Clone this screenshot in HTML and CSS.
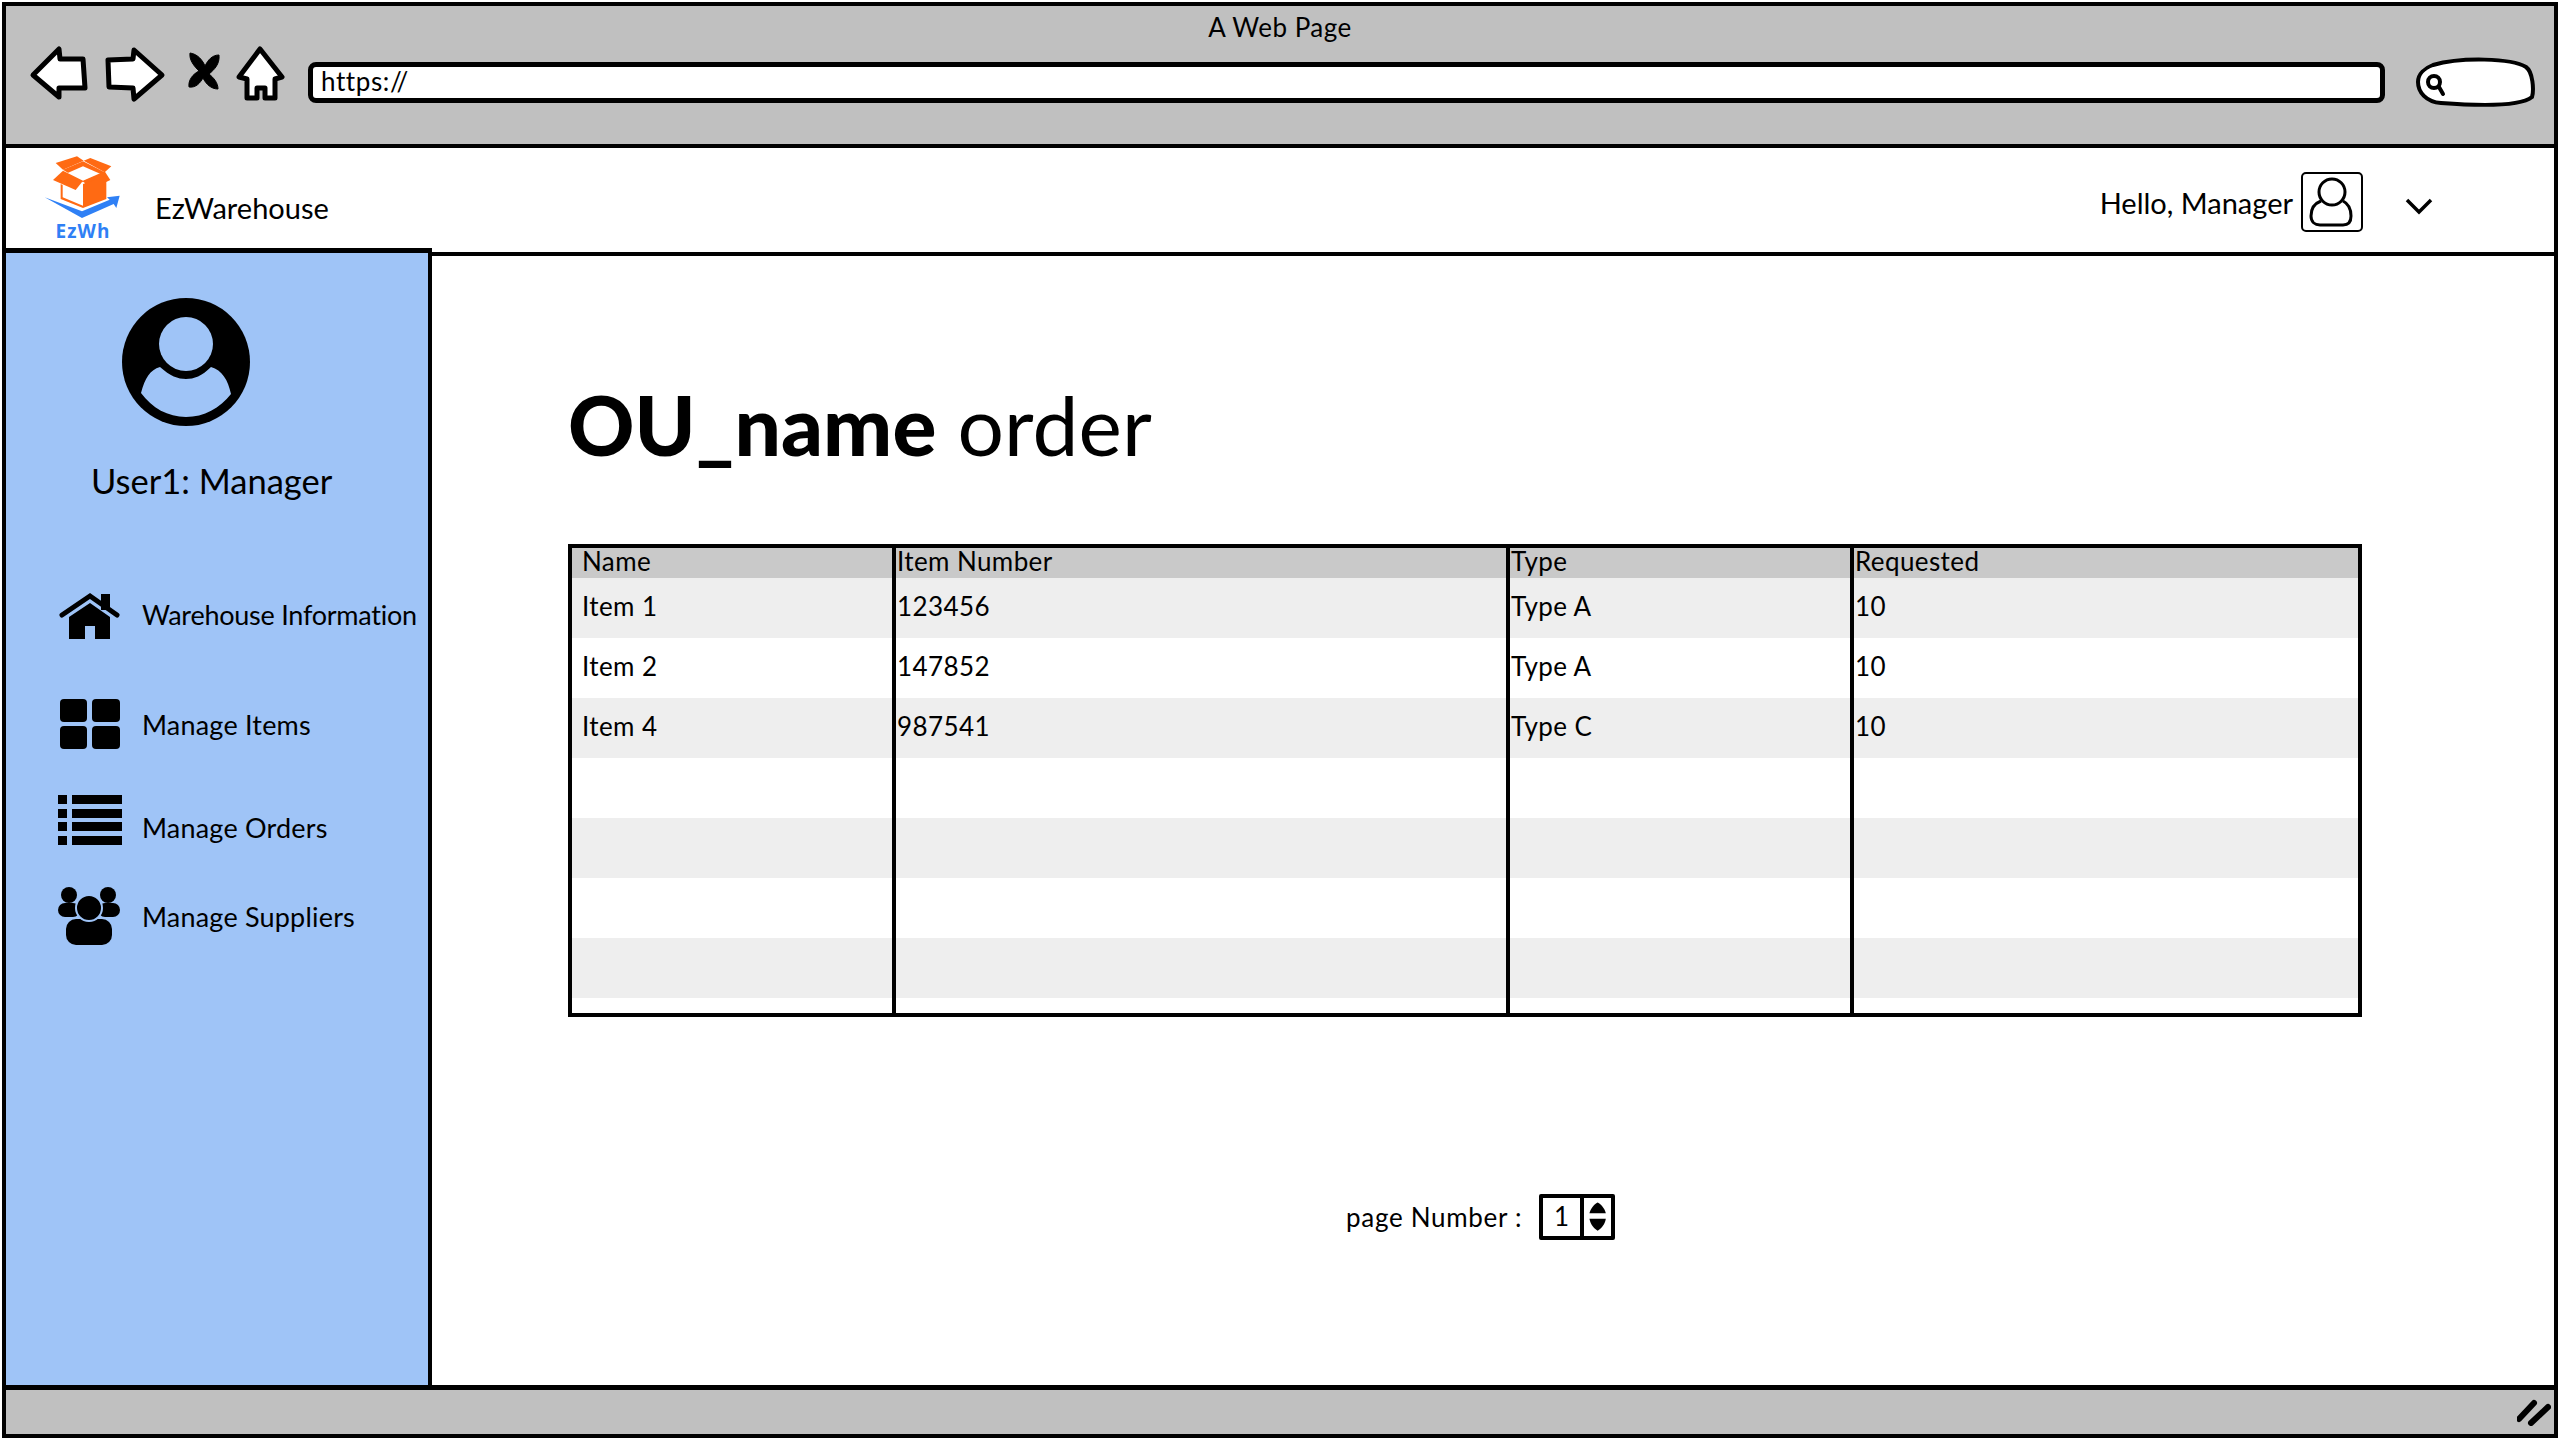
FILE: index.html
```html
<!DOCTYPE html>
<html lang="en">
<head>
    <meta charset="UTF-8">
    <title>A Web Page</title>
    <link rel="stylesheet" href="styles.css">
</head>
<body>

<div class="window">
    <div class="chrome">
        <div class="chrome-title">A Web Page</div>
        <div class="toolbar">
            <svg class="tool tool-back" viewBox="29 45 60 58"><path d="M33 75L59 49L60 59L83 59L85 88L59 88L59 97Z"/></svg>
            <svg class="tool tool-forward" viewBox="101 45 66 58"><path d="M108 60L133 59L134 50L162 75L134 99L133 88L109 87Z"/></svg>
            <svg class="tool tool-stop" viewBox="179 45 43 58"><path class="solid" d="M190 53C198 54 203 61 205 66C208 60 212 55 219 55C220 64 214 70 209 74C214 78 218 83 218 89C211 89 206 84 203 78C200 83 196 88 189 87C188 80 193 74 199 71C194 66 189 60 190 53Z"/></svg>
            <svg class="tool tool-home" viewBox="234 45 52 58"><path d="M260 49L282 77L275 79L275 98L265 98L265 88L257 88L257 98L247 98L247 79L239 77Z"/></svg>
            <div class="url-bar">https://</div>
            <svg class="search-pill" viewBox="2414 56 122 52">
                <path class="pill" d="M2432 65C2460 57 2510 58 2525 67C2532 72 2533 90 2531 97C2520 106 2480 106 2440 103C2425 102 2417 92 2417 82C2417 74 2424 68 2432 65Z"/>
                <circle class="glass" cx="2433" cy="82" r="6"/>
                <line class="glass" x1="2438" y1="87" x2="2442" y2="94"/>
            </svg>
        </div>
    </div>

    <header class="app-header">
        <div class="logo">
            <svg class="logo-mark" viewBox="130 460 240 195">
                <path class="orange" d="M168 487L232 467L252 480L190 507Z"/>
                <path class="orange" d="M252 480L272 472L335 497L315 515Z"/>
                <path class="orange" d="M190 507L250 482L315 515L250 545Z"/>
                <path class="white" d="M197 520L250 497L303 520L250 542Z"/>
                <path class="orange" d="M160 538L190 510L250 540L228 568Z"/>
                <path class="orange" d="M250 540L315 512L332 538L270 568Z"/>
                <path class="orange" d="M250 550L320 525L320 595L250 622Z"/>
                <path class="orange" d="M183 550L189 553L189 590L250 615L250 622L183 595Z"/>
                <path class="blue" d="M135 590L247 632L330 597L322 590L360 585L350 622L342 610L247 652Z"/>
            </svg>
            <span class="logo-text">EzWh</span>
        </div>
        <div class="brand">EzWarehouse</div>
        <div class="greeting">Hello, Manager</div>
        <div class="avatar-box">
            <svg viewBox="2304 178 58 56">
                <circle cx="2333" cy="196" r="13"/>
                <path d="M2322 205C2314 208 2312 214 2312 220C2312 226 2316 229 2321 229L2344 229C2349 229 2352 226 2352 220C2352 214 2350 208 2344 205"/>
            </svg>
        </div>
        <svg class="chevron" viewBox="0 0 30 18"><path d="M3 3L15 15L27 3"/></svg>
    </header>

    <div class="body-row">
        <aside class="sidebar">
            <svg class="user-pic" viewBox="122 298 128 128">
                <circle class="dark" cx="186" cy="362" r="64"/>
                <circle class="light" cx="186" cy="344" r="27"/>
                <path class="light" d="M141 393C145 378 150 370 160 367C170 376 178 379 186 379C194 379 202 376 211 367C222 370 228 380 231 394C220 408 204 417 186 417C168 417 152 408 141 393Z"/>
            </svg>
            <div class="user-name">User1: Manager</div>
            <nav class="side-nav">
                <a class="nav-item">
                    <svg class="nav-icon nav-icon-house" viewBox="58 590 64 54">
                        <rect x="101" y="595" width="9" height="16"/>
                        <path class="roof" d="M62 616L90 597L117 616"/>
                        <path d="M90 604L110 618V640H95V627H85V640H69V618Z"/>
                    </svg>
                    <span>Warehouse Information</span>
                </a>
                <a class="nav-item">
                    <svg class="nav-icon" viewBox="58 697 64 54">
                        <rect x="60" y="699" width="27" height="23" rx="4"/>
                        <rect x="92" y="699" width="28" height="23" rx="4"/>
                        <rect x="60" y="726" width="27" height="23" rx="4"/>
                        <rect x="92" y="726" width="28" height="23" rx="4"/>
                    </svg>
                    <span>Manage Items</span>
                </a>
                <a class="nav-item">
                    <svg class="nav-icon nav-icon-list" viewBox="58 793 64 54">
                        <rect x="58" y="795" width="9" height="9"/>
                        <rect x="72" y="795" width="50" height="9"/>
                        <rect x="58" y="809" width="9" height="9"/>
                        <rect x="72" y="809" width="50" height="9"/>
                        <rect x="58" y="822" width="9" height="9"/>
                        <rect x="72" y="822" width="50" height="9"/>
                        <rect x="58" y="836" width="9" height="9"/>
                        <rect x="72" y="836" width="50" height="9"/>
                    </svg>
                    <span>Manage Orders</span>
                </a>
                <a class="nav-item">
                    <svg class="nav-icon nav-icon-group" viewBox="58 888 64 60">
                        <circle cx="69" cy="897" r="8"/>
                        <circle cx="108" cy="897" r="8"/>
                        <rect x="58" y="905" width="22" height="14" rx="7"/>
                        <rect x="98" y="905" width="22" height="14" rx="7"/>
                        <rect x="66" y="921" width="46" height="26" rx="10"/>
                        <circle class="ring" cx="89" cy="910" r="13"/>
                    </svg>
                    <span>Manage Suppliers</span>
                </a>
            </nav>
        </aside>

        <main class="content">
            <h1 class="page-title"><strong>OU_name</strong> order</h1>
            <table class="items-table">
                <colgroup>
                    <col class="col-name">
                    <col class="col-number">
                    <col class="col-type">
                    <col class="col-requested">
                </colgroup>
                <thead>
                    <tr><th>Name</th><th>Item Number</th><th>Type</th><th>Requested</th></tr>
                </thead>
                <tbody>
                    <tr><td>Item 1</td><td>123456</td><td>Type A</td><td>10</td></tr>
                    <tr><td>Item 2</td><td>147852</td><td>Type A</td><td>10</td></tr>
                    <tr><td>Item 4</td><td>987541</td><td>Type C</td><td>10</td></tr>
                    <tr><td></td><td></td><td></td><td></td></tr>
                    <tr><td></td><td></td><td></td><td></td></tr>
                    <tr><td></td><td></td><td></td><td></td></tr>
                    <tr><td></td><td></td><td></td><td></td></tr>
                    <tr class="table-end"><td></td><td></td><td></td><td></td></tr>
                </tbody>
            </table>
            <div class="pager">
                <span class="pager-label">page Number :</span>
                <div class="spinner">
                    <span class="spinner-value">1</span>
                    <svg class="spinner-arrows" viewBox="0 0 30 38">
                        <path d="M15 3C19 5 23 10 24 15H6C7 10 11 5 15 3Z"/>
                        <path d="M6 21H24C23 27 19 32 15 34C11 32 7 27 6 21Z"/>
                    </svg>
                </div>
            </div>
        </main>
    </div>

    <footer class="status-bar">
        <svg class="grip" viewBox="0 0 34 28">
            <path d="M2 21L17 5"/>
            <path d="M14 25L31 9"/>
        </svg>
    </footer>
</div>

</body>
</html>
```

FILE: styles.css
```css
body {
    margin: 0;
    background-color: white;
    color: black;
    font-family: 'Lato', sans-serif;
}
.window {
    box-sizing: border-box;
    width: 2556px;
    height: 1436px;
    margin: 2px 2px 0;
    border: 4px solid black;
    display: flex;
    flex-direction: column;
}

/* browser chrome */
.chrome {
    box-sizing: border-box;
    height: 142px;
    padding-top: 6px;
    background-color: #c0c0c0;
    border-bottom: 4px solid black;
}
.chrome-title {
    text-align: center;
    font-size: 26px;
    line-height: 30px;
    letter-spacing: 0.5px;
}
.toolbar {
    display: flex;
    align-items: flex-start;
    gap: 12px;
    margin-top: 3px;
    padding-left: 23px;
}
.tool {
    height: 58px;
    flex-shrink: 0;
}
.tool path {
    fill: white;
    stroke: black;
    stroke-width: 5;
    stroke-linejoin: round;
}
.tool path.solid {
    fill: black;
    stroke-width: 1;
}
.tool-back { width: 60px; }
.tool-forward { width: 66px; }
.tool-stop { width: 43px; }
.tool-home { width: 52px; }
.url-bar {
    box-sizing: border-box;
    width: 2077px;
    height: 41px;
    margin: 17px 0 0 10px;
    padding-left: 8px;
    background-color: white;
    border: 5px solid black;
    border-radius: 8px;
    font-size: 26px;
    line-height: 28px;
    letter-spacing: 0.6px;
}
.search-pill {
    width: 122px;
    height: 52px;
    margin: 11px 0 0 18px;
}
.pill {
    fill: white;
    stroke: black;
    stroke-width: 4;
}
.glass {
    fill: none;
    stroke: black;
    stroke-width: 4;
    stroke-linecap: round;
}

/* app header */
.app-header {
    box-sizing: border-box;
    height: 108px;
    display: flex;
    align-items: center;
    padding: 0 0 3px 37px;
    border-bottom: 4px solid black;
}
.logo {
    width: 80px;
    display: flex;
    flex-direction: column;
    align-items: center;
}
.logo-mark {
    width: 80px;
    height: 65px;
}
.orange { fill: #ff6a13; }
.white { fill: white; }
.blue { fill: #2f80f5; }
.logo-text {
    color: #2f80f5;
    font-family: 'Open Sans', sans-serif;
    font-weight: 700;
    font-size: 19px;
    line-height: 24px;
    letter-spacing: 1px;
}
.brand {
    margin: 18px 0 0 32px;
    font-size: 29px;
}
.greeting {
    margin-left: auto;
    margin-top: 8px;
    font-size: 29px;
}
.avatar-box {
    box-sizing: border-box;
    width: 62px;
    height: 60px;
    margin: 6px 0 0 8px;
    border: 2px solid black;
    border-radius: 5px;
}
.avatar-box svg {
    display: block;
    width: 58px;
    height: 56px;
    fill: none;
    stroke: black;
    stroke-width: 3;
}
.chevron {
    width: 30px;
    height: 18px;
    margin: 14px 120px 0 41px;
    fill: none;
    stroke: black;
    stroke-width: 3.5;
}

.body-row {
    flex: 1;
    display: flex;
    min-height: 0;
}

/* sidebar starts a little above the header line, as in the sketch */
.sidebar {
    box-sizing: border-box;
    width: 426px;
    margin-top: -8px;
    padding-top: 45px;
    background-color: #9fc4f7;
    border-top: 5px solid black;
    border-right: 4px solid black;
}
.user-pic {
    display: block;
    width: 128px;
    height: 128px;
    margin-left: 116px;
}
.dark { fill: black; }
.light { fill: #9fc4f7; }
.user-name {
    margin: 33px 0 0 85px;
    font-size: 34.5px;
    line-height: 44px;
}
.side-nav {
    margin-top: 81px;
}
.nav-item {
    height: 60px;
    display: flex;
    align-items: center;
    gap: 20px;
    padding-left: 52px;
    font-size: 27px;
    letter-spacing: 0.2px;
    white-space: nowrap;
}
.nav-item:nth-child(1) { letter-spacing: -0.25px; }
.nav-item:nth-child(2) { margin-top: 50px; }
.nav-item:nth-child(3) { margin-top: 43px; }
.nav-item:nth-child(4) { margin-top: 29px; }
.nav-icon {
    width: 64px;
    height: 54px;
    flex-shrink: 0;
}
.nav-icon-house { margin-top: 4px; }
.nav-icon-list { margin-top: -14px; }
.nav-icon-group { height: 60px; }
.roof {
    fill: none;
    stroke: black;
    stroke-width: 5;
    stroke-linecap: round;
}
.ring {
    stroke: #9fc4f7;
    stroke-width: 2;
}

/* main area */
.content {
    flex: 1;
    padding: 120px 0 0 136px;
}
.page-title {
    margin: 0 0 72px;
    font-size: 82px;
    line-height: 96px;
    font-weight: 400;
    letter-spacing: 0.1px;
}
.page-title strong {
    font-weight: 900;
}
.items-table {
    box-sizing: border-box;
    width: 1794px;
    table-layout: fixed;
    border-collapse: separate;
    border-spacing: 0;
    border: 4px solid black;
    font-size: 26px;
    letter-spacing: 0.4px;
}
.col-name { width: 324px; }
.col-number { width: 614px; }
.col-type { width: 344px; }
.items-table th, .items-table td {
    box-sizing: border-box;
    padding: 0 0 0 1px;
    border-right: 4px solid black;
    text-align: left;
    font-weight: 400;
}
.items-table th:last-child, .items-table td:last-child {
    border-right: none;
}
.items-table th:first-child, .items-table td:first-child {
    padding-left: 10px;
}
.items-table th {
    height: 30px;
    padding-bottom: 3px;
    line-height: 27px;
    background-color: #c9c9c9;
}
.items-table td {
    height: 60px;
    padding-top: 13px;
    line-height: 30px;
    vertical-align: top;
}
.items-table tbody tr:nth-child(odd) td {
    background-color: #eeeeee;
}
.items-table .table-end td {
    height: 15px;
    padding-top: 0;
    line-height: 0;
    background-color: white;
}

.pager {
    display: flex;
    align-items: center;
    margin: 177px 0 0 778px;
}
.pager-label {
    font-size: 26px;
    letter-spacing: 0.7px;
    margin-right: 17px;
}
.spinner {
    box-sizing: border-box;
    width: 76px;
    height: 46px;
    display: flex;
    border: 4px solid black;
    border-radius: 2px;
}
.spinner-value {
    box-sizing: border-box;
    width: 43px;
    border-right: 4px solid black;
    text-align: center;
    font-size: 26px;
    line-height: 36px;
}
.spinner-arrows {
    width: 29px;
    height: 38px;
}

/* bottom bar */
.status-bar {
    box-sizing: border-box;
    height: 49px;
    flex-shrink: 0;
    display: flex;
    justify-content: flex-end;
    align-items: center;
    padding-right: 3px;
    background-color: #c0c0c0;
    border-top: 5px solid black;
}
.grip {
    width: 34px;
    height: 28px;
    fill: none;
    stroke: black;
    stroke-width: 6;
    stroke-linecap: round;
}
```
